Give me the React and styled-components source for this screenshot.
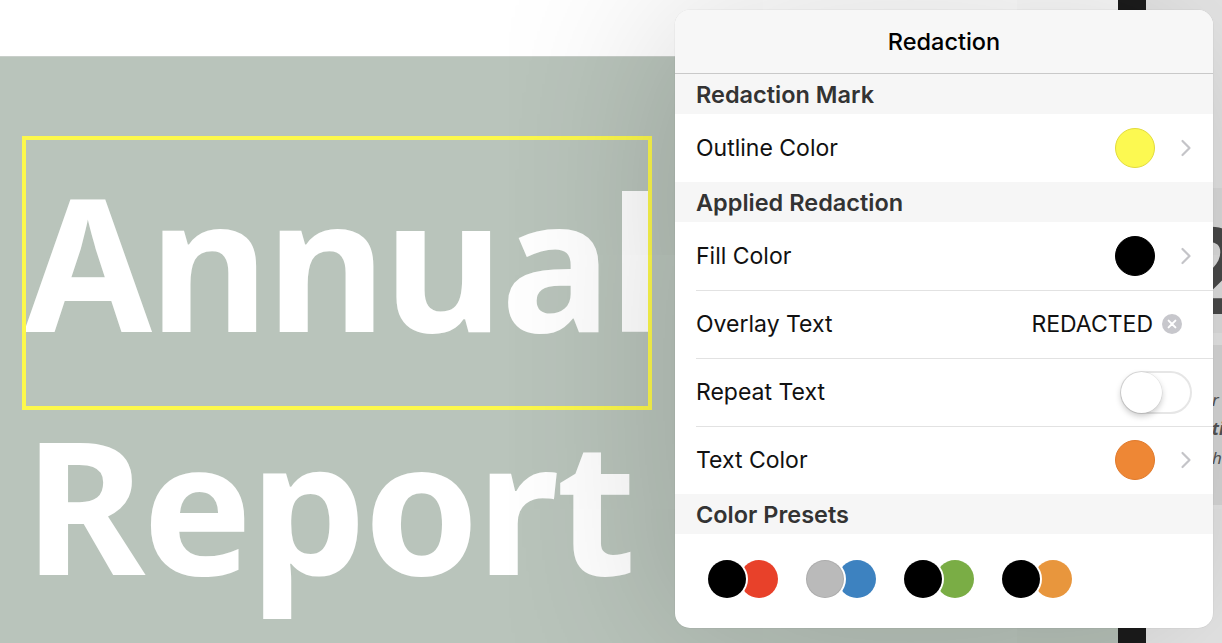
import React, { useState } from "react";
import styled, { createGlobalStyle } from "styled-components";

const GlobalStyle = createGlobalStyle`
  html, body {
    margin: 0;
    padding: 0;
    overflow: hidden;
    background: #e9e9e9;
  }
  * { box-sizing: border-box; }
`;

const rows = {
  mark: [{ label: "Outline Color", swatch: "#fcf951", ring: "#e2db3c" }],
  applied: [
    { label: "Fill Color", swatch: "#000000", ring: "#000000" },
    { label: "Overlay Text", text: "REDACTED" },
    { label: "Repeat Text", toggle: true },
    { label: "Text Color", swatch: "#ee8735", ring: "#e07a2c" },
  ],
};

const presets = [
  ["#000000", "#e8412a"],
  ["#bababa", "#3d82c0"],
  ["#000000", "#7aad45"],
  ["#000000", "#e8963d"],
];

export default function App() {
  const [repeat, setRepeat] = useState(false);

  return (
    <>
      <GlobalStyle />
      <Stage>
        <Document>
          <TopMargin />
          <Cover>
            <Headline>
              Annual
              <br />
              Report
            </Headline>
            {/* redaction mark drawn on the page */}
            <Mark />
          </Cover>
        </Document>
        <Spine />
        <NextPage>
          <Band $h={145} $top={188} $bg="#e1e1e1">
            <BigDigit>2</BigDigit>
          </Band>
          <Band $h={160} $top={12} $bg="#dadada">
            <Italic>r a</Italic>
            <Italic $bold>ti</Italic>
            <Italic>he</Italic>
          </Band>
        </NextPage>

        <Panel>
          <Header>Redaction</Header>
          <Section>Redaction Mark</Section>
          {rows.mark.map((r) => (
            <SettingRow key={r.label} row={r} />
          ))}
          <Section>Applied Redaction</Section>
          {rows.applied.map((r, i) => (
            <SettingRow
              key={r.label}
              row={r}
              divider={i > 0}
              on={repeat}
              onToggle={() => setRepeat(!repeat)}
            />
          ))}
          <Section>Color Presets</Section>
          <Presets>
            {presets.map(([a, b], i) => (
              <Pair key={i}>
                <Dot $c={b} $back />
                <Dot $c={a} />
              </Pair>
            ))}
          </Presets>
        </Panel>
      </Stage>
    </>
  );
}

function SettingRow({ row, divider, on, onToggle }) {
  return (
    <Row $divider={divider}>
      <Label>{row.label}</Label>
      <Trailing>
        {row.swatch && (
          <>
            <Swatch $c={row.swatch} $ring={row.ring} />
            <Chevron />
          </>
        )}
        {row.text && (
          <>
            <Value>{row.text}</Value>
            <ClearIcon />
          </>
        )}
        {row.toggle && (
          <Switch $on={on} onClick={onToggle}>
            <Knob $on={on} />
          </Switch>
        )}
      </Trailing>
    </Row>
  );
}

function Chevron() {
  return (
    <ChevronSvg width="12" height="18" viewBox="0 0 12 18">
      <path
        d="M2.5 2 L9.5 9 L2.5 16"
        fill="none"
        stroke="#c4c4c8"
        strokeWidth="2.2"
        strokeLinecap="round"
        strokeLinejoin="round"
      />
    </ChevronSvg>
  );
}

function ClearIcon() {
  return (
    <ClearSvg width="20" height="20" viewBox="0 0 20 20">
      <circle cx="10" cy="10" r="10" fill="#c7c7cc" />
      <path
        d="M6.6 6.6 L13.4 13.4 M13.4 6.6 L6.6 13.4"
        stroke="#fff"
        strokeWidth="2"
        strokeLinecap="round"
      />
    </ClearSvg>
  );
}

const Stage = styled.div`
  position: relative;
  display: flex;
  width: 1222px;
  height: 643px;
  overflow: hidden;
`;

const Document = styled.div`
  flex: 0 0 1118px;
  display: flex;
  flex-direction: column;
  background: #fff;
`;

const TopMargin = styled.div`
  height: 57px;
  border-bottom: 1px solid #c9cfca;
`;

const Cover = styled.div`
  position: relative;
  flex: 1;
  background: #b9c4bb;
  padding: 82px 0 0 24px;
`;

const Headline = styled.div`
  font-family: "Noto Sans", sans-serif;
  font-weight: 700;
  font-size: 185px;
  line-height: 243px;
  letter-spacing: -3px;
  color: #fff;
  white-space: nowrap;
`;

const Mark = styled.div`
  position: absolute;
  left: 22px;
  top: 79px;
  width: 630px;
  height: 274px;
  border: 4px solid #fcf84c;
`;

const Spine = styled.div`
  flex: 0 0 28px;
  background: #1c1c1c;
`;

const NextPage = styled.div`
  flex: 1;
  min-width: 0;
  overflow: hidden;
  background: #e9e9e9;
  display: flex;
  flex-direction: column;
`;

const Band = styled.div`
  flex: 0 0 ${(p) => p.$h}px;
  margin-top: ${(p) => p.$top}px;
  background: ${(p) => p.$bg};
  padding: 30px 0 0 30px;
  overflow: hidden;
`;

const BigDigit = styled.div`
  font-family: "Noto Sans", sans-serif;
  font-weight: 700;
  font-size: 120px;
  line-height: 100px;
  color: #4a4a4a;
`;

const Italic = styled.div`
  font-family: "Noto Sans", sans-serif;
  font-style: italic;
  font-weight: ${(p) => (p.$bold ? 700 : 400)};
  font-size: 17px;
  line-height: 29px;
  color: #555;
  padding-left: 36px;
  white-space: nowrap;
  &:first-child {
    margin-top: 10px;
  }
`;

const Panel = styled.div`
  position: absolute;
  left: 675px;
  top: 10px;
  width: 538px;
  height: 618px;
  background: #fff;
  border-radius: 15px;
  overflow: hidden;
  box-shadow: 0 0 0 0.5px rgba(0, 0, 0, 0.06), 0 6px 190px rgba(0, 0, 0, 0.2);
  font-family: Inter, "Liberation Sans", sans-serif;
`;

const Header = styled.div`
  height: 64px;
  display: flex;
  align-items: center;
  justify-content: center;
  background: #f7f7f7;
  border-bottom: 1px solid #c9c9c9;
  font-size: 23.5px;
  font-weight: 500;
  color: #000;
`;

const Section = styled.div`
  height: 40px;
  display: flex;
  align-items: center;
  padding-left: 21px;
  background: #f6f6f6;
  font-size: 23.5px;
  font-weight: 600;
  color: #333;
`;

const Row = styled.div`
  position: relative;
  height: 68px;
  display: flex;
  align-items: center;
  justify-content: space-between;
  padding: 0 21px;
  &::before {
    content: "";
    display: ${(p) => (p.$divider ? "block" : "none")};
    position: absolute;
    left: 21px;
    right: 0;
    top: 0;
    height: 1px;
    background: #e2e2e2;
  }
`;

const Label = styled.span`
  font-size: 23px;
  color: #111;
`;

const Trailing = styled.div`
  display: flex;
  align-items: center;
`;

const Swatch = styled.span`
  width: 40px;
  height: 40px;
  border-radius: 50%;
  background: ${(p) => p.$c};
  border: 1px solid ${(p) => p.$ring};
`;

const ChevronSvg = styled.svg`
  margin-left: 25px;
  display: block;
`;

const Value = styled.span`
  font-size: 23px;
  color: #111;
`;

const ClearSvg = styled.svg`
  display: block;
  margin: 0 10px 0 9px;
`;

const Switch = styled.button`
  position: relative;
  width: 72px;
  height: 43px;
  border-radius: 22px;
  border: 2px solid #e6e6e6;
  background: ${(p) => (p.$on ? "#4cd964" : "#fff")};
  padding: 0;
  cursor: pointer;
`;

const Knob = styled.span`
  position: absolute;
  top: -1px;
  left: ${(p) => (p.$on ? "30px" : "-1px")};
  width: 41px;
  height: 41px;
  border-radius: 50%;
  background: #fff;
  box-shadow: 0 3px 6px rgba(0, 0, 0, 0.22), 0 0 0 0.5px rgba(0, 0, 0, 0.08);
`;

const Presets = styled.div`
  height: 94px;
  display: flex;
  align-items: center;
  gap: 28px;
  padding: 0 0 4px 33px;
`;

const Pair = styled.div`
  position: relative;
  width: 70px;
  height: 38px;
`;

const Dot = styled.span`
  position: absolute;
  top: 0;
  left: ${(p) => (p.$back ? "32px" : "0")};
  width: 38px;
  height: 38px;
  border-radius: 50%;
  background: ${(p) => p.$c};
  ${(p) =>
    p.$back
      ? ""
      : "box-shadow: 0 0 0 2px #fff; border: 1px solid rgba(0,0,0,0.08);"}
`;
